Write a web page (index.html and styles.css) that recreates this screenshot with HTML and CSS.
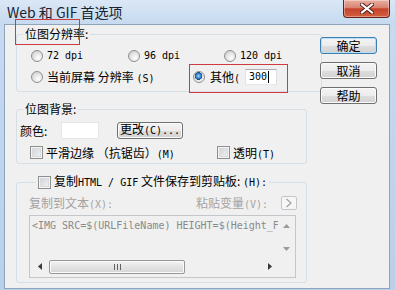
FILE: index.html
```html
<!DOCTYPE html>
<html lang="zh-CN">
<head>
  <meta charset="UTF-8">
  <title>Web 和 GIF 首选项</title>
  <link rel="stylesheet" href="styles.css">
</head>
<body>

  <div class="window">
    <!-- Title bar -->
    <div class="titlebar">
      <span class="title">Web 和 GIF 首选项</span>
      <span class="close">
        <svg width="14" height="11" viewBox="0 0 14 11">
          <path d="M2 1.5 L12 9.5 M12 1.5 L2 9.5" stroke="#4a1a12" stroke-width="4" stroke-linecap="square"/>
          <path d="M2 1.5 L12 9.5 M12 1.5 L2 9.5" stroke="#fff" stroke-width="2.2" stroke-linecap="square"/>
        </svg>
      </span>
    </div>

    <div class="client">
      <div class="groups">

        <!-- Resolution -->
        <fieldset class="group res">
          <legend class="marked">位图分辨率:</legend>
          <div class="row dpi">
            <label class="opt"><i class="radio"></i><span class="a">72 dpi</span></label>
            <label class="opt"><i class="radio"></i><span class="a">96 dpi</span></label>
            <label class="opt"><i class="radio"></i><span class="a">120 dpi</span></label>
          </div>
          <div class="row">
            <label class="opt screen"><i class="radio"></i><span>当前屏幕 分辨率 <span class="a">(S)</span></span></label>
            <label class="opt other"><i class="radio on"></i><span>其他<span class="a">(</span></span><span class="field"><span class="a caret">300</span></span></label>
          </div>
        </fieldset>

        <!-- Background -->
        <fieldset class="group bg">
          <legend>位图背景:</legend>
          <div class="row color-row">
            <span class="color-label">颜色:</span>
            <span class="swatch"></span>
            <span class="btn change"><span>更改<span class="a">(C)...</span></span></span>
          </div>
          <div class="row">
            <label class="opt smooth"><i class="check"></i><span>平滑边缘 （抗锯齿）<span class="a">(M)</span></span></label>
            <label class="opt"><i class="check"></i><span>透明<span class="a">(T)</span></span></label>
          </div>
        </fieldset>

        <!-- Clipboard -->
        <fieldset class="group clip">
          <legend><label class="opt"><i class="check"></i><span>复制<span class="a">HTML / GIF</span> 文件保存到剪贴板: <span class="a">(H):</span></span></label></legend>
          <div class="row clip-row">
            <span class="muted">复制到文本<span class="a">(X):</span></span>
            <span class="muted paste">粘贴变量<span class="a">(V):</span></span>
            <span class="arrow-btn">
              <svg width="8" height="10" viewBox="0 0 8 10"><path d="M1.5 1 L6 5 L1.5 9" fill="none" stroke="#a0a0a0" stroke-width="1.2"/></svg>
            </span>
          </div>
          <div class="textbox">
            <div class="text">&lt;IMG SRC=$(URLFileName) HEIGHT=$(Height_F</div>
            <div class="vscroll">
              <svg width="7" height="4" viewBox="0 0 7 4"><path d="M0 4 L3.5 0 L7 4 Z" fill="#9a9a9a"/></svg>
              <svg width="7" height="4" viewBox="0 0 7 4"><path d="M0 0 L3.5 4 L7 0 Z" fill="#9a9a9a"/></svg>
            </div>
            <div class="hscroll">
              <svg class="arr" width="4" height="7" viewBox="0 0 4 7"><path d="M4 0 L0 3.5 L4 7 Z" fill="#3a3a3a"/></svg>
              <span class="thumb"><span class="grip"></span></span>
              <svg class="arr" width="4" height="7" viewBox="0 0 4 7"><path d="M0 0 L4 3.5 L0 7 Z" fill="#3a3a3a"/></svg>
            </div>
            <div class="corner"></div>
          </div>
        </fieldset>

      </div>

      <!-- Dialog buttons -->
      <div class="buttons">
        <span class="btn default">确定</span>
        <span class="btn">取消</span>
        <span class="btn">帮助</span>
      </div>
    </div>
  </div>

</body>
</html>
```

FILE: styles.css
```css
* {
  box-sizing: border-box;
}

body {
  margin: 0;
  font-family: "Noto Sans CJK SC", "Noto Sans", sans-serif;
  font-size: 12px;
  color: #000;
}

/* ascii runs, monospaced like the dialog font */
.a {
  font-family: "DejaVu Sans Mono", monospace;
  font-size: 10px;
}

/* Window frame */
.window {
  width: 395px;
  height: 290px;
  padding: 0 5px 1px 4px;
  display: flex;
  flex-direction: column;
  background: linear-gradient(#dae7f5, #c6daf0 24px, #b8d0eb);
}

.titlebar {
  height: 24px;
  display: flex;
  justify-content: space-between;
  align-items: flex-start;
}

.title {
  padding: 4px 0 0 3px;
  font-size: 14px;
  line-height: 16px;
  color: #1a2331;
}

.close {
  width: 47px;
  height: 18px;
  display: flex;
  align-items: center;
  justify-content: center;
  border: 1px solid #6a2218;
  border-top: 0;
  border-radius: 0 0 4px 4px;
  background: linear-gradient(#eab0a2, #d98470 45%, #c6432b 52%, #d2603f);
  box-shadow: inset 0 0 0 1px rgba(255, 255, 255, 0.35);
}

/* Client area */
.client {
  flex: 1;
  display: flex;
  gap: 13px;
  padding: 2px 12px 0 11px;
  background: #f0f0f0;
  border: 1px solid #8fa3ba;
}

.groups {
  width: 291px;
}

/* Group boxes */
.group {
  margin: 0;
  padding: 0 0 4px 0;
  border: 1px solid #d5dfe5;
  border-radius: 3px;
}

.group legend {
  margin-left: 6px;
  padding: 0 2px;
  line-height: 14px;
  position: relative;
}

.group + .group {
  margin-top: 10px;
}

/* annotation frames */
.marked::after {
  content: "";
  position: absolute;
  left: -8px;
  top: -8px;
  width: 63px;
  height: 24px;
  border: 1px solid #cf3a40;
}

.row {
  display: flex;
  align-items: center;
}

.opt {
  display: flex;
  align-items: center;
  gap: 4px;
  white-space: nowrap;
}

.res {
  padding-top: 4px;
}

.res .row {
  height: 21px;
  padding-left: 14px;
}

.dpi .opt {
  width: 97px;
}

.dpi .opt:nth-child(2) {
  width: 96px;
}

.screen {
  width: 162px;
}

.other {
  position: relative;
  gap: 5px;
}

.other::after {
  content: "";
  position: absolute;
  left: -4px;
  top: -4px;
  width: 97px;
  height: 27px;
  border: 1px solid #cf3a40;
}

.field {
  width: 32px;
  height: 16px;
  margin-left: 0;
  padding-left: 3px;
  display: flex;
  align-items: center;
  background: #fff;
  border: 1px solid #abadb3;
  border-color: #abadb3 #dbdfe6 #e3e9ef #e2e3ea;
}

.caret {
  border-right: 1px solid #000;
  padding-right: 1px;
  line-height: 12px;
}

/* Radio buttons and checkboxes */
.radio {
  width: 12px;
  height: 12px;
  flex: none;
  border-radius: 50%;
  border: 1px solid #8e8f8f;
  background: radial-gradient(circle at 65% 70%, #fff, #e6e6e6 45%, #c6c6c6);
}

.radio.on {
  background: radial-gradient(circle at 45% 40%, #a9dcfb 0, #2d7fc2 30%, #0e4f8d 45%, #e8e8e8 50%, #f4f4f4);
}

.check {
  width: 13px;
  height: 13px;
  flex: none;
  border: 1px solid #8e8f8f;
  background: linear-gradient(135deg, #cbcfd5, #f5f6f7);
  box-shadow: inset 0 0 0 1px #f4f4f4, inset 0 0 0 2px #d8dade;
}

/* Background group */
.bg {
  padding-top: 5px;
  padding-bottom: 2px;
}

.bg .row {
  height: 18px;
  padding-left: 13px;
}

.bg .row + .row {
  margin-top: 4px;
}

.bg .color-row {
  padding-left: 3px;
}

.color-label {
  width: 41px;
}

.swatch {
  width: 38px;
  height: 17px;
  background: #fff;
  border: 1px solid #e6e6e6;
}

.change {
  width: 66px;
  margin-left: 18px;
}

.smooth {
  width: 187px;
}

.bg .opt {
  gap: 3px;
}

/* Buttons */
.btn {
  height: 17px;
  display: flex;
  align-items: center;
  justify-content: center;
  border: 1px solid #707070;
  border-radius: 3px;
  background: linear-gradient(#f4f4f4, #ececec 50%, #dedede 51%, #d2d2d2);
  box-shadow: inset 0 0 0 1px #fbfbfb;
  line-height: 14px;
}

.btn.default {
  border-color: #3c7fb1;
  box-shadow: inset 0 0 0 1px #b7def5;
}

.buttons {
  width: 57px;
  margin-top: 10px;
  display: flex;
  flex-direction: column;
  gap: 8px;
}

/* Clipboard group */
.clip {
  padding: 4px 10px 4px 12px;
}

.clip legend {
  margin-left: 7px;
}

.clip legend .opt {
  gap: 3px;
}

.clip-row {
  height: 17px;
}

.muted {
  color: #a3a3a3;
}

.paste {
  margin-left: auto;
}

.arrow-btn {
  width: 16px;
  height: 14px;
  margin: 0 -1px 0 13px;
  display: flex;
  align-items: center;
  justify-content: center;
  border: 1px solid #c2c6cb;
  border-radius: 2px;
  background: #f6f6f6;
}

.textbox {
  height: 63px;
  margin-top: 4px;
  display: grid;
  grid-template-columns: 1fr 17px;
  grid-template-rows: 42px 17px;
  border: 1px solid #c3c7cc;
  background: #f0f0f0;
}

.text {
  padding: 3px 0 0 2px;
  overflow: hidden;
  white-space: nowrap;
  font-family: "DejaVu Sans Mono", monospace;
  font-size: 10px;
  line-height: 13px;
  color: #8a8a8a;
}

.vscroll {
  display: flex;
  flex-direction: column;
  align-items: center;
  justify-content: space-between;
  padding: 8px 0 7px;
}

.hscroll {
  display: flex;
  align-items: center;
  padding: 0 6px 0 8px;
}

.thumb {
  width: 136px;
  height: 14px;
  margin-left: 7px;
  display: flex;
  align-items: center;
  justify-content: center;
  border: 1px solid #979797;
  border-radius: 2px;
  background: linear-gradient(#f4f4f4, #e3e3e3 50%, #d6d6d6);
  box-shadow: inset 0 0 0 1px #fafafa;
}

.grip {
  width: 7px;
  height: 6px;
  background: repeating-linear-gradient(90deg, #606060 0 1px, transparent 1px 3px);
}

.hscroll .arr:last-child {
  margin-left: auto;
}
```
